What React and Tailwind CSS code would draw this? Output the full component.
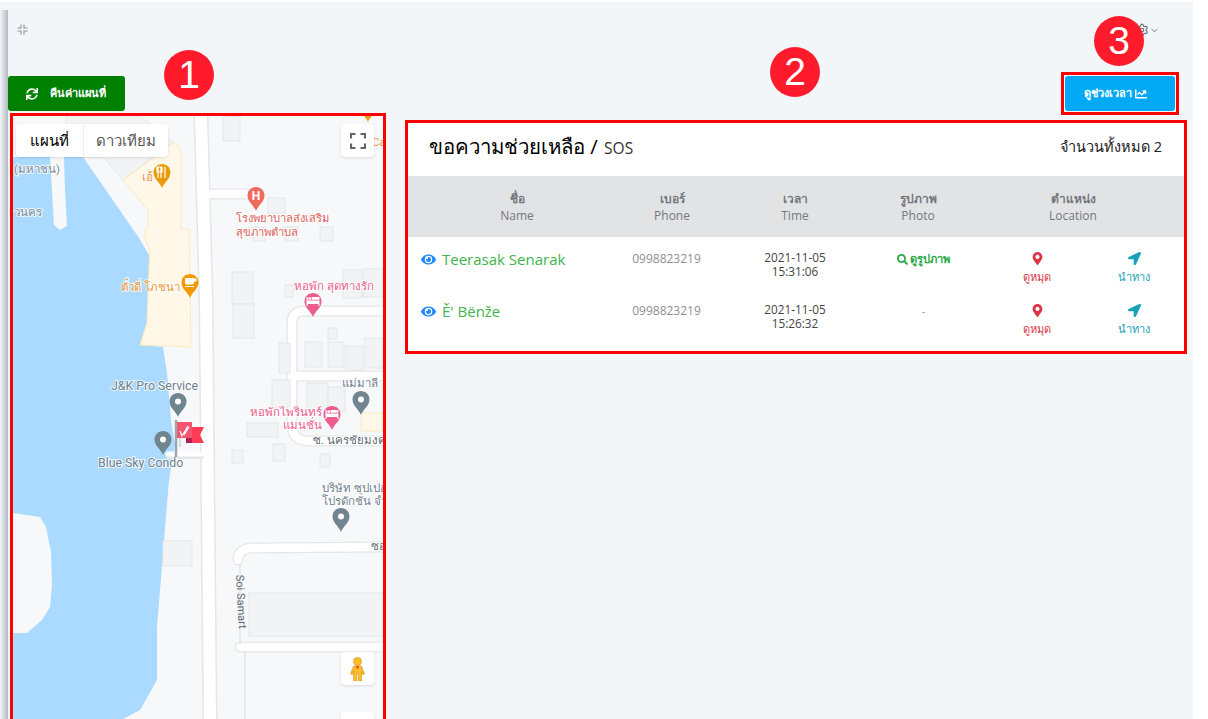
import { ChevronDown, Settings } from 'lucide-react';
import { FaSync, FaChartLine, FaEye, FaSearch, FaMapMarkerAlt, FaLocationArrow } from 'react-icons/fa';

const people = [
  { name: "Teerasak Senarak", phone: '0998823219', date: '2021-11-05', time: '15:31:06', photo: true },
  { name: "Ě' Bënže", phone: '0998823219', date: '2021-11-05', time: '15:26:32', photo: false },
];

const buildings = [
  [223, 116, 17, 25], [268, 198, 17, 15], [253, 227, 12, 14], [285, 227, 13, 14], [320, 227, 13, 14],
  [232, 272, 21, 32], [233, 304, 21, 34], [285, 285, 8, 12], [343, 270, 19, 28], [363, 269, 20, 28],
  [305, 342, 17, 25], [328, 342, 16, 25], [346, 346, 17, 24], [365, 338, 18, 30], [328, 328, 9, 11],
  [279, 343, 11, 30], [272, 380, 18, 27], [307, 383, 21, 30], [328, 387, 17, 25], [247, 423, 31, 14],
  [232, 450, 11, 13], [273, 444, 12, 17], [320, 454, 10, 13], [163, 541, 29, 25],
];

const Pin = ({ x, y, color, glyph }) => (
  <g transform={`translate(${x} ${y})`}>
    <path d="M0 0C-1.5 -5 -8.5 -9 -8.5 -15.5C-8.5 -20.5 -4.5 -24 0 -24C4.5 -24 8.5 -20.5 8.5 -15.5C8.5 -9 1.5 -5 0 0Z" fill={color} />
    {glyph === 'dot' && <circle cx="0" cy="-15.5" r="3" fill="#fff" />}
    {glyph === 'H' && <text x="0" y="-11" textAnchor="middle" fontSize="12" fontWeight="700" fontFamily="Roboto, sans-serif" fill="#fff">H</text>}
    {glyph === 'fork' && <path d="M-4 -21V-10M-1 -21V-10M3 -21V-10M-5 -21H0V-16H-5Z" stroke="#fff" strokeWidth="1.2" fill="none" />}
    {glyph === 'cup' && <path d="M-5 -20H4V-15.5C4 -14 3 -13.5 2 -13.5H-3C-4 -13.5 -5 -14 -5 -15.5ZM4 -19.5H6.5V-16.5H4ZM-5 -12H4V-11H-5Z" fill="#fff" />}
    {glyph === 'bed' && <path d="M-6.5 -20H-5.3V-16.5H6.5V-11H5.3V-13H-5.3V-11H-6.5ZM-4.6 -19.5H-2V-17.2H-4.6ZM-1.4 -20H6.5V-17.2H-1.4Z" fill="#fff" />}
  </g>
);

const Label = ({ x, y, color, anchor = 'start', children, size = 11.5 }) => (
  <text x={x} y={y} fill={color} textAnchor={anchor} fontSize={size} fontFamily="Roboto, 'Noto Sans', sans-serif" stroke="#fff" strokeWidth="2" paintOrder="stroke" strokeOpacity="0.8">
    {children}
  </text>
);

const MapDrawing = () => (
  <svg className="absolute inset-0 w-full h-full" viewBox="13 116 370 603">
    <rect x="13" y="116" width="370" height="603" fill="#f7f8fa" />
    {/* water */}
    <path d="M13 157H50L54 225L60 230L67 226L65 190L64 157H83L139 238L149 255L147 323L140 345L163 347L167 373L171 420L175 445L169 480L157 627L157 680L140 710L123 719H13V633L27 633L42 620L50 607L52 585L51 552L46 527L40 517L13 513Z" fill="#aadaff" />
    <path d="M66 116H140L173 142L123 180L103 157L83 157L66 140Z" fill="#f1f3f4" stroke="#e6e8ea" />
    {/* food court */}
    <path d="M123 180L175 142L181 150V229H189L191 347L140 345L147 323L150 250L145 240V229H148V210Z" fill="#fff8e8" stroke="#fde9bd" />
    {/* roads */}
    <g fill="none" strokeLinecap="round" strokeLinejoin="round">
      <path d="M201 116L206 300L210 719" stroke="#e4e6ea" strokeWidth="15" />
      <path d="M210 194H247M383 311H304Q292 311 292 323V425Q292 441 309 441H383M292 376H383M383 547L250 548Q238 550 238 560M240 647H383" stroke="#e4e6ea" strokeWidth="11" />
      <path d="M201 116L206 300L210 719" stroke="#ffffff" strokeWidth="12" />
      <path d="M210 194H247M383 311H304Q292 311 292 323V425Q292 441 309 441H383M292 376H383M383 547L250 548Q238 550 238 560M240 647H383" stroke="#ffffff" strokeWidth="8.5" />
      <path d="M240 565V644M245 652V719" stroke="#e2e4e8" strokeWidth="1.5" />
      <path d="M168 457H202" stroke="#e4e6ea" strokeWidth="4" />
      <path d="M168 454H202" stroke="#fff" strokeWidth="5" />
    </g>
    {/* buildings */}
    {buildings.map(([x, y, w, h], i) => (
      <rect key={i} x={x} y={y} width={w} height={h} fill="#f1f3f4" stroke="#e4e6ea" />
    ))}
    <rect x="249" y="593" width="134" height="43" fill="#f1f3f4" stroke="#e4e6ea" />
    <rect x="361" y="413" width="22" height="18" fill="#fff8e8" stroke="#fde9bd" />

    {/* labels */}
    <Label x="14" y="173" color="#7c8a96">(มหาชน)</Label>
    <Label x="14" y="216" color="#7c8a96">วนคร</Label>
    <Label x="153" y="181" color="#e8963c" anchor="end" size="12">เอ้</Label>
    <Label x="236" y="222" color="#e0605a" size="11.2">โรงพยาบาลส่งเสริม</Label>
    <Label x="236" y="236" color="#e0605a" size="11.2">สุขภาพตำบล</Label>
    <Label x="121" y="291" color="#e8963c">ตั๋วดี่ โภชนา</Label>
    <Label x="294" y="290" color="#ec5c8c">หอพัก สุดทางรัก</Label>
    <Label x="111" y="390" color="#70808e" size="12.3">{"J&K Pro Service"}</Label>
    <Label x="98" y="467" color="#70808e" size="12.3">Blue Sky Condo</Label>
    <Label x="342" y="387" color="#70808e">แม่มาลี</Label>
    <Label x="322" y="416" color="#ec5c8c" anchor="end">หอพักไพรินทร์</Label>
    <Label x="322" y="429" color="#ec5c8c" anchor="end">แมนชั่น</Label>
    <Label x="313" y="444" color="#5f6a73">ซ. นครชัยมงคล</Label>
    <Label x="322" y="492" color="#70808e">บริษัท ซุปเปอร์</Label>
    <Label x="322" y="505" color="#70808e">โปรดักชั่น จำกัด</Label>
    <Label x="371" y="550" color="#5f6a73">ซอย</Label>
    <Label x="372" y="146" color="#e8963c">Ca</Label>
    <text transform="translate(236 575) rotate(87)" fontSize="11" fontFamily="Roboto, sans-serif" fill="#5f6a73">Soi Samart</text>

    <Pin x={162} y={188} color="#ea9a0b" glyph="fork" />
    <Pin x={256} y={211} color="#ee6a5f" glyph="H" />
    <Pin x={190} y={298} color="#f29900" glyph="cup" />
    <Pin x={313} y={317} color="#ec5c8c" glyph="bed" />
    <Pin x={178} y={417} color="#70858f" glyph="dot" />
    <Pin x={163} y={455} color="#70858f" glyph="dot" />
    <Pin x={361} y={415} color="#70858f" glyph="dot" />
    <Pin x={332} y={430} color="#ec5c8c" glyph="bed" />
    <Pin x={341} y={532} color="#70858f" glyph="dot" />
    <Pin x={368} y={122} color="#ea9a0b" />

    {/* flag marker */}
    <path d="M176 420V457" stroke="#9aa6b2" strokeWidth="2.5" />
    <path d="M180 436V447" stroke="#b4bcc6" strokeWidth="1" />
    <path d="M186 427H204L200 435L204 443H186Z" fill="#ff3b55" />
    <path d="M186 438H192V443H186Z" fill="#b01e50" />
    <rect x="177" y="422" width="15" height="16" fill="#f5566f" />
    <path d="M180 431L182 436L188 426M184 435L189 427" fill="none" stroke="#fff" strokeWidth="1.2" />
  </svg>
);

const NumberBadge = ({ n, className }) => (
  <div className={`absolute w-[50px] h-[50px] rounded-full bg-[#ff1b2b] text-white flex items-center justify-center text-[39px] font-['Liberation_Sans',sans-serif] ${className}`}>
    {n}
  </div>
);

export default function App() {
  return (
    <div className="relative w-[1208px] h-[719px] bg-white overflow-hidden font-['Open_Sans','Noto_Sans',sans-serif]">
      <div className="relative w-[1193px] h-[717px] mt-[2px] bg-[#f3f6f9] flex flex-col pl-2">
        <div className="absolute left-0 top-2 bottom-0 w-2 bg-linear-to-r from-[#f3f6f9] to-[#b4b8c4]" />

        {/* Top bar */}
        <div className="h-[70px] shrink-0 flex items-start justify-between pt-[22px] pl-[9px] pr-[33px]">
          <svg className="w-[11px] h-[11px] text-[#8a8f98]" viewBox="0 0 11 11" fill="none" stroke="currentColor" strokeWidth="1.1">
            <path d="M4 0.5V4H0.5M7 0.5V4H10.5M4 10.5V7H0.5M7 10.5V7H10.5" />
          </svg>
          <div className="flex items-center text-[#6b7280] -mt-px">
            <Settings className="w-[14px] h-[14px]" />
            <ChevronDown className="w-[11px] h-[11px]" />
          </div>
        </div>

        <div className="flex flex-1 min-h-0">
          {/* Left column */}
          <div className="w-[378px] shrink-0 flex flex-col pt-1">
            <button className="w-[117px] h-[35px] shrink-0 rounded-[3px] bg-[#008000] text-white flex items-center justify-center gap-[12px] text-[11px] font-bold pr-[2px]">
              <FaSync className="w-[12px] h-[12px]" />
              คืนค่าแผนที่
            </button>
            <div className="relative mt-[2px] ml-[2px] w-[376px] flex-1 border-[3px] border-b-0 border-[#ff0000] overflow-hidden">
              <MapDrawing />
              <div className="absolute left-[3px] top-2 flex h-[33px] bg-white shadow-sm rounded-sm text-[15px]">
                <div className="w-[67px] flex items-center justify-center text-black">แผนที่</div>
                <div className="w-[85px] flex items-center justify-center text-[#565656] border-l border-[#eeeeee]">ดาวเทียม</div>
              </div>
              <div className="absolute left-[328px] top-2 w-[33px] h-[33px] bg-white rounded-sm shadow-sm flex items-center justify-center text-[#666]">
                <svg className="w-4 h-4" viewBox="0 0 16 16" fill="none" stroke="currentColor" strokeWidth="2.2">
                  <path d="M1 5.5V1H5.5M10.5 1H15V5.5M15 10.5V15H10.5M5.5 15H1V10.5" />
                </svg>
              </div>
              <div className="absolute left-[328px] top-[536px] w-[33px] h-[33px] bg-white rounded-sm shadow-sm flex items-center justify-center">
                <svg className="w-[15px] h-6" viewBox="0 0 15 24">
                  <circle cx="7.5" cy="4.5" r="4" fill="#fdbc2c" stroke="#d98f10" strokeWidth="0.6" />
                  <path d="M3.5 9H11.5L14.5 17L12.5 17.5L11.5 14V24H8.3V17H6.7V24H3.5V14L2.5 17.5L0.5 17Z" fill="#fdbc2c" stroke="#d98f10" strokeWidth="0.6" />
                  <path d="M5.5 9L7.5 12.5L9.5 9Z" fill="#e2562c" />
                </svg>
              </div>
              <div className="absolute left-[328px] top-[596px] w-[33px] h-[33px] bg-white rounded-sm shadow-sm" />
            </div>
          </div>

          {/* Right column */}
          <div className="flex-1 flex flex-col pl-[19px]">
            <div className="flex justify-end pr-[14px]">
              <div className="border-[3px] border-[#ff0000] p-px">
                <button className="w-[110px] h-[35px] rounded-[3px] bg-[#03a9f4] text-white flex items-center justify-center gap-[3px] text-[11px] font-bold pr-[9px]">
                  ดูช่วงเวลา
                  <FaChartLine className="w-[12px] h-[12px]" />
                </button>
              </div>
            </div>

            <div className="mt-[5px] w-[782px] h-[234px] border-[3px] border-[#ff0000] bg-white">
              <div className="h-[53px] flex items-center justify-between pl-[21px] pr-[22px] pb-[6px]">
                <div className="text-[20.4px] text-black">
                  <span className="font-medium">ขอความช่วยเหลือ</span> / <span className="text-[15.5px] text-[#333] pl-px">SOS</span>
                </div>
                <div className="text-[14.5px] text-[#222]">จำนวนทั้งหมด 2</div>
              </div>

              <div className="grid grid-cols-[218px_92px_154px_92px_146px_74px] h-[61px] bg-[#e2e3e5] items-center text-center text-[12px] leading-[17px] text-[#72787f]">
                <div><div className="font-bold">ชื่อ</div>Name</div>
                <div><div className="font-bold">เบอร์</div>Phone</div>
                <div><div className="font-bold">เวลา</div>Time</div>
                <div><div className="font-bold">รูปภาพ</div>Photo</div>
                <div className="col-span-2 pr-[2px]"><div className="font-bold">ตำแหน่ง</div>Location</div>
              </div>

              {people.map((p) => (
                <div key={p.name} className="grid grid-cols-[218px_92px_154px_92px_146px_74px] h-[52px] pt-[12px] text-center items-start">
                  <div className="flex items-center gap-[6px] pl-[13px] text-[15px] leading-5 text-[#3db54a] text-left">
                    <FaEye className="w-[15px] h-[15px] text-[#1e88ff]" />
                    {p.name}
                  </div>
                  <div className="text-[12px] leading-5 text-[#8f8f8f] pr-[11px]">{p.phone}</div>
                  <div className="text-[11.8px] leading-[14px] text-[#444] pt-px">
                    <div>{p.date}</div>
                    <div>{p.time}</div>
                  </div>
                  <div className="text-[11px] leading-5 font-semibold text-[#28a745] pl-[11px] whitespace-nowrap">
                    {p.photo ? (
                      <span className="inline-flex items-center gap-[2px]">
                        <FaSearch className="w-[11px] h-[11px]" />
                        ดูรูปภาพ
                      </span>
                    ) : (
                      <span className="font-normal text-[#999]">-</span>
                    )}
                  </div>
                  <div className="flex flex-col items-center text-[11px] leading-4 text-[#dc3545] pt-[3px]">
                    <FaMapMarkerAlt className="w-[13px] h-[13px] mb-[4px]" />
                    ดูหมุด
                  </div>
                  <div className="flex flex-col items-center text-[11px] leading-4 text-[#17a2b8] pr-[26px] pt-[3px]">
                    <FaLocationArrow className="w-[13px] h-[13px] mb-[4px]" />
                    นำทาง
                  </div>
                </div>
              ))}
            </div>
          </div>
        </div>
      </div>

      <NumberBadge n="1" className="left-[164px] top-[50px]" />
      <NumberBadge n="2" className="left-[770px] top-[47px]" />
      <NumberBadge n="3" className="left-[1094px] top-[16px]" />
    </div>
  );
}
